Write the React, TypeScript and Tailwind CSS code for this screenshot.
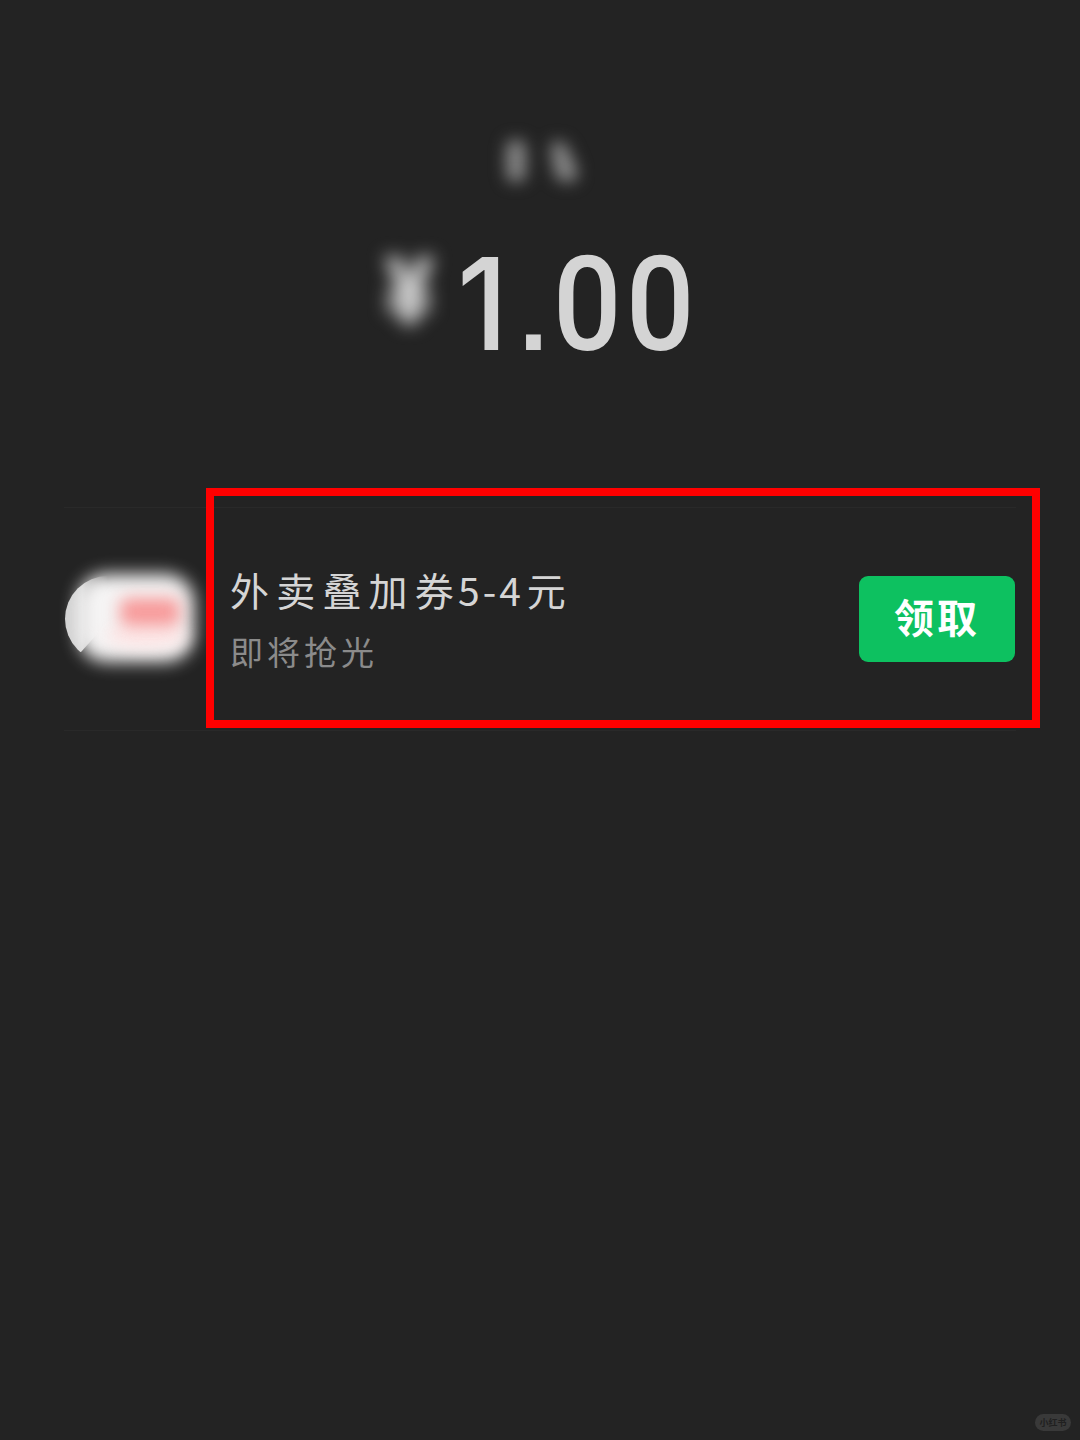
const BlurredName = () => (
  <svg width="120" height="80" viewBox="0 0 120 80" className="block overflow-visible">
    <defs>
      <filter id="nameBlur" x="-50%" y="-50%" width="200%" height="200%" colorInterpolationFilters="sRGB">
        <feGaussianBlur stdDeviation="8" />
      </filter>
    </defs>
    <g fill="#868686" filter="url(#nameBlur)">
      <rect x="26" y="19" width="20" height="42" rx="8" />
      <path d="M76 20q10 0 13 10l8 18q3 13-9 13-13 0-14-12l-3-18q-1-11 5-11z" />
    </g>
  </svg>
);

const CouponLogo = () => (
  <svg width="150" height="130" viewBox="0 0 150 130" className="block overflow-visible">
    <defs>
      <filter id="logoBlur" x="-30%" y="-40%" width="160%" height="180%" colorInterpolationFilters="sRGB">
        <feGaussianBlur stdDeviation="8.5" />
      </filter>
      <filter id="logoRed" x="-50%" y="-100%" width="200%" height="300%" colorInterpolationFilters="sRGB">
        <feGaussianBlur stdDeviation="8" />
      </filter>
      <linearGradient id="logoFade" gradientUnits="userSpaceOnUse" x1="1" y1="0" x2="44" y2="0">
        <stop offset="0" stopColor="#d0d0d0" />
        <stop offset="0.4" stopColor="#d0d0d0" />
        <stop offset="1" stopColor="#d0d0d0" stopOpacity="0" />
      </linearGradient>
      <clipPath id="logoEdge">
        <path d="M0 0H60V50L17 98H0z" />
      </clipPath>
    </defs>
    <circle cx="44" cy="65" r="43" fill="url(#logoFade)" clipPath="url(#logoEdge)" />
    <rect x="14" y="20" width="116" height="88" rx="28" fill="#f5f4f4" filter="url(#logoBlur)" />
    <ellipse cx="82" cy="82" rx="40" ry="12" fill="#fde6e6" filter="url(#logoRed)" />
    <rect x="56" y="44" width="60" height="28" rx="8" fill="#f79a9a" filter="url(#logoRed)" />
  </svg>
);

const App = () => {
  return (
    <div className="relative flex h-[1440px] w-[1080px] flex-col overflow-hidden bg-[#232323] font-['Noto_Sans_CJK_SC',sans-serif]">
      <header className="flex h-[507px] flex-col items-center pt-[121px]">
        <BlurredName />
        <div className="mt-[29px] flex w-full pl-[380px] text-[#d4d4d4]">
          <span className="w-[77px] pl-[4px] pt-[15px] font-['Roboto',sans-serif] text-[94px] leading-[94px] font-black text-[#d0d0d0] blur-[9px]">
            ¥
          </span>
          <div className="flex items-baseline leading-[148px]">
            <span className="w-[62px] origin-left scale-x-[0.96] font-['Inter',sans-serif] text-[128px] font-medium">1</span>
            <span className="w-[34px] font-['Liberation_Sans',sans-serif] text-[104px] font-bold">.</span>
            <span className="origin-left scale-x-[0.92] font-['Roboto',sans-serif] text-[131px] font-medium tracking-[5px]">
              00
            </span>
          </div>
        </div>
      </header>

      <section className="mx-16 flex h-[224px] items-center border-y border-[#292929]">
        <div className="w-[166px]">
          <CouponLogo />
        </div>
        <div className="flex-1">
          <h2 className="flex h-[60px] items-center text-[39px] whitespace-nowrap text-[#d5d5d5]">
            <span className="tracking-[7.2px]">外卖叠加券</span>
            <span className="-ml-[3px] tracking-[3px]">5-4</span>
            <span className="ml-[3px]">元</span>
          </h2>
          <p className="flex h-[60px] items-center pt-[6px] text-[33px] tracking-[4px] text-[#8b8b8b]">即将抢光</p>
        </div>
        <button className="mr-px h-[86px] w-[156px] rounded-[9px] bg-[#0dc160] pb-[5px] text-[40px] leading-[81px] font-bold tracking-[3px] text-white">
          领取
        </button>
      </section>

      {/* red highlight over the coupon row */}
      <div className="absolute top-[488px] left-[206px] h-[240px] w-[834px] border-8 border-[#ff0000]" />

      <footer className="mt-auto flex justify-end pr-[9px] pb-[9px]">
        <span className="flex h-[17px] w-9 items-center justify-center rounded-full bg-[#393939] text-[9px] font-bold text-[#202020]">
          小红书
        </span>
      </footer>
    </div>
  );
};

export default App;
